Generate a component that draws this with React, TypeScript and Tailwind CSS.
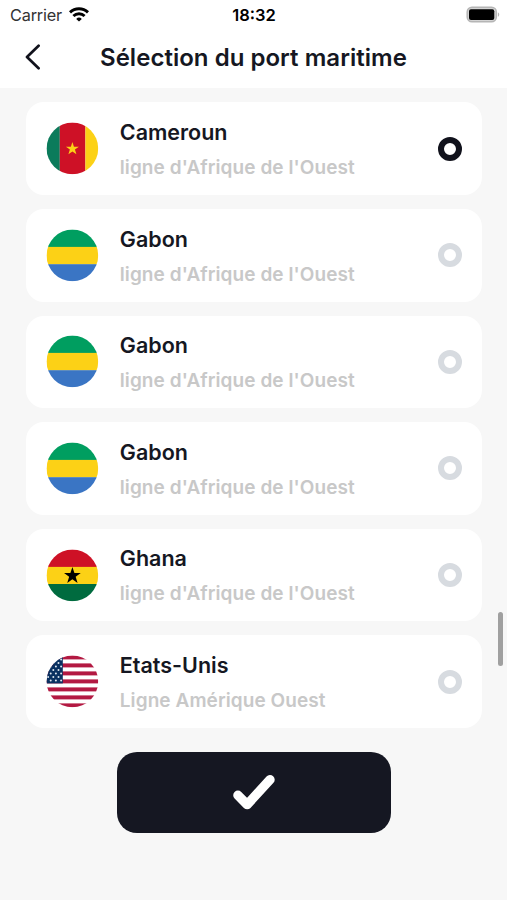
import { useState } from "react";

type FlagName = "cameroon" | "gabon" | "ghana" | "usa";

const ports: { name: string; line: string; flag: FlagName }[] = [
  { name: "Cameroun", line: "ligne d'Afrique de l'Ouest", flag: "cameroon" },
  { name: "Gabon", line: "ligne d'Afrique de l'Ouest", flag: "gabon" },
  { name: "Gabon", line: "ligne d'Afrique de l'Ouest", flag: "gabon" },
  { name: "Gabon", line: "ligne d'Afrique de l'Ouest", flag: "gabon" },
  { name: "Ghana", line: "ligne d'Afrique de l'Ouest", flag: "ghana" },
  { name: "Etats-Unis", line: "Ligne Amérique Ouest", flag: "usa" },
];

// five-pointed star centred on the flag
function Star({ r, fill }: { r: number; fill: string }) {
  const points = Array.from({ length: 10 }, (_, i) => {
    const radius = i % 2 ? r * 0.39 : r;
    const angle = (i * Math.PI) / 5 - Math.PI / 2;
    return `${26 + radius * Math.cos(angle)},${26.4 + radius * Math.sin(angle)}`;
  }).join(" ");
  return <polygon points={points} fill={fill} />;
}

function Flag({ name }: { name: FlagName }) {
  return (
    <svg viewBox="-0.4 -0.4 53 53" className="h-[53px] w-[53px] shrink-0">
      <clipPath id="flag-circle">
        <circle cx="26" cy="26" r="25.8" />
      </clipPath>
      <g clipPath="url(#flag-circle)">
        {name === "cameroon" && (
          <>
            <rect width="13.4" height="52" fill="#0b7b5b" />
            <rect x="13.4" width="25.6" height="52" fill="#ce1126" />
            <rect x="39" width="13" height="52" fill="#fcd116" />
            <Star r={6.8} fill="#fcd116" />
          </>
        )}
        {name === "gabon" && (
          <>
            <rect width="52" height="18" fill="#009e60" />
            <rect y="17.5" width="52" height="17.5" fill="#fcd116" />
            <rect y="34.8" width="52" height="17.2" fill="#3a75c4" />
          </>
        )}
        {name === "ghana" && (
          <>
            <rect width="52" height="18" fill="#ce1126" />
            <rect y="17.5" width="52" height="17.5" fill="#fcd116" />
            <rect y="34.6" width="52" height="17.4" fill="#006b3f" />
            <Star r={8.8} fill="#000" />
          </>
        )}
        {name === "usa" && (
          <>
            <rect width="52" height="52" fill="#fff" />
            {[0, 8, 16, 24, 32, 40, 48].map((y) => (
              <rect key={y} y={y} width="52" height="4" fill="#b31942" />
            ))}
            <rect width="16.4" height="28" fill="#0a3161" />
            {[4, 7.5, 11, 14.5, 18, 21.5, 25].map((y, row) =>
              [0, 1, 2].map((col) => (
                <circle key={`${y}-${col}`} cx={(row % 2 ? 1.7 : 4.3) + col * 5.2} cy={y} r="1" fill="#dfe7f0" />
              ))
            )}
          </>
        )}
      </g>
    </svg>
  );
}

function StatusBar() {
  return (
    <div className="grid h-[30px] grid-cols-3 items-center pr-[7px] pl-[10px] text-black">
      <div className="flex items-center gap-[7px]">
        <span className="text-[16.3px] leading-none tracking-[-0.2px] text-[#333]">Carrier</span>
        <svg viewBox="0 0 20 15" className="h-[15px] w-[20px]" fill="none" stroke="#000" strokeWidth="2.9">
          <path d="M1 5.4a13 13 0 0 1 18 0" />
          <path d="M4.4 9a8.1 8.1 0 0 1 11.2 0" />
          <path d="M10 14.6 7.2 11.9a4 4 0 0 1 5.6 0Z" fill="#000" stroke="none" />
        </svg>
      </div>
      <span className="-translate-x-px text-center text-[16.5px] leading-none font-semibold">18:32</span>
      <svg viewBox="0 0 34 17" className="h-[17px] w-[34px] -translate-y-px justify-self-end">
        <rect x="1.2" y="1.2" width="29.1" height="14.6" rx="4.8" fill="#d4d4d4" stroke="#b5b5b5" strokeWidth="1.5" />
        <rect x="3" y="3.3" width="25.3" height="10.6" rx="2" fill="#000" />
        <path d="M31.9 6.2c1.8.8 1.8 3.8 0 4.6Z" fill="#b5b5b5" />
      </svg>
    </div>
  );
}

export default function App() {
  const [selected, setSelected] = useState(0);

  return (
    <div className="relative h-[900px] w-[507px] overflow-hidden bg-[#f7f7f7] font-['Inter',sans-serif]">
      <header className="h-[88px] bg-white">
        <StatusBar />
        <div className="flex h-[56px] items-center pl-[24px]">
          <button aria-label="Retour" className="flex w-[76px]">
            <svg viewBox="0 0 17 26" className="h-[26px] w-[17px] -translate-y-px" fill="none" stroke="#11121c" strokeWidth="2.7" strokeLinecap="round" strokeLinejoin="round">
              <path d="M14.6 1.8 3 13l11.6 11.2" />
            </svg>
          </button>
          <h1 className="text-[24px] font-semibold tracking-[0.03px] whitespace-nowrap text-[#151722]">
            Sélection du port maritime
          </h1>
        </div>
      </header>

      <div className="flex flex-col gap-[14px] pt-[14.4px] pr-[25px] pl-[25.5px]">
        {ports.map((port, i) => (
          <button
            key={i}
            onClick={() => setSelected(i)}
            className="flex h-[92.6px] items-center rounded-[18px] bg-white pr-[20px] pl-[20.5px] text-left"
          >
            <Flag name={port.flag} />
            <div className="ml-[20.8px] flex-1 pt-[0.8px]">
              <div className="text-[21.5px] leading-[28px] font-semibold text-[#151722]">{port.name}</div>
              <div className="mt-[10px] text-[19px] leading-[24px] font-semibold tracking-[0.08px] text-[#c8c8c8]">
                {port.line}
              </div>
            </div>
            <span
              className={`h-6 w-6 rounded-full border-[6.5px] ${
                i === selected ? "border-[#11121c]" : "border-[#d7dbe0]"
              }`}
            />
          </button>
        ))}
      </div>

      <button
        aria-label="Valider"
        className="mx-auto mt-[24px] flex h-[81px] w-[274px] items-center justify-center rounded-[20px] bg-[#151722]"
      >
        <svg viewBox="0 0 44 38" className="h-[38px] w-[44px]" fill="none" stroke="#fff" strokeWidth="9.4" strokeLinecap="round" strokeLinejoin="round">
          <path d="M5.9 22.3 15.2 31.6 38 6.6" />
        </svg>
      </button>

      {/* scroll indicator */}
      <div className="absolute top-[612px] right-[4px] h-[54px] w-[5px] rounded-full bg-[#a0a0a0]" />
    </div>
  );
}
